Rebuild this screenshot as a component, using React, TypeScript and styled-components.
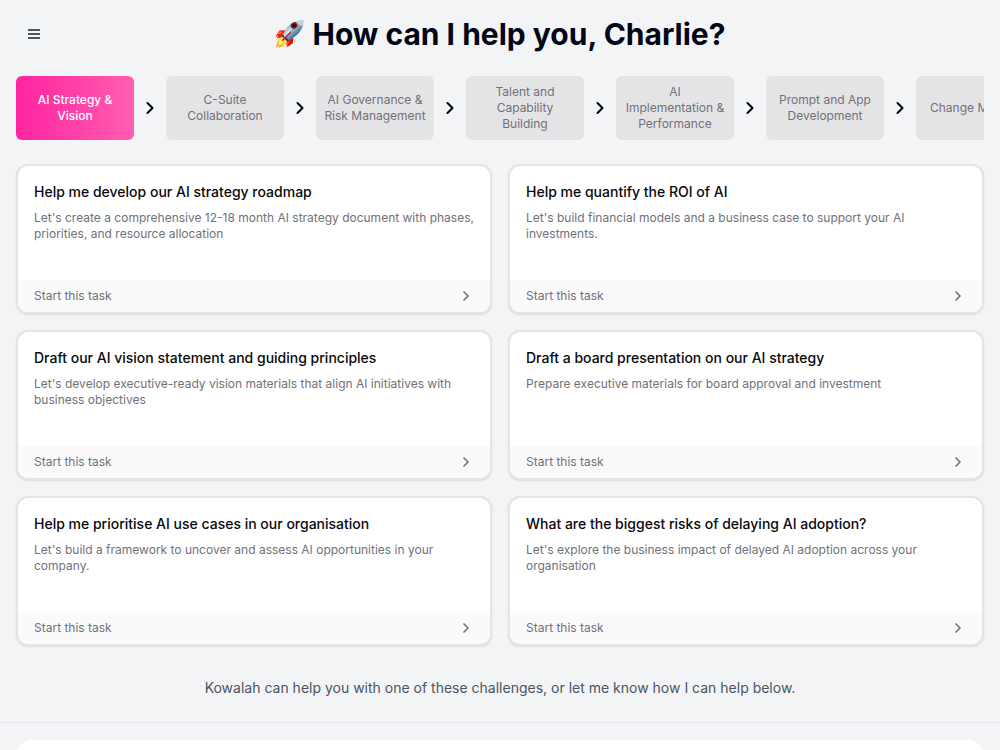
import React from "react";
import styled, { createGlobalStyle } from "styled-components";
import { ChevronRight } from "lucide-react";

const GlobalStyle = createGlobalStyle`
  *, *::before, *::after { box-sizing: border-box; }
  body {
    margin: 0;
    background: #f3f4f6;
    font-family: Inter, "Liberation Sans", sans-serif;
    color: #020617;
  }
  h1, h2, p, ol, ul { margin: 0; padding: 0; }
  button, textarea { font: inherit; }
`;

const Page = styled.div`
  height: 100vh;
  overflow: hidden;
`;

const Header = styled.header`
  display: grid;
  grid-template-columns: 36px 1fr 36px;
  align-items: center;
  padding: 16px;
`;

const MenuButton = styled.button`
  display: flex;
  align-items: center;
  justify-content: center;
  height: 36px;
  padding: 0;
  border: 0;
  border-radius: 6px;
  background: transparent;
  color: #4b5563;
  cursor: pointer;
`;

const Title = styled.h1`
  display: flex;
  align-items: center;
  justify-content: center;
  gap: 8px;
  font-size: 30px;
  line-height: 36px;
  font-weight: 700;
`;

const Steps = styled.ol`
  display: flex;
  margin: 8px 16px 0;
  overflow: hidden;
  list-style: none;
`;

const Step = styled.li`
  display: flex;
  flex: none;
  align-items: center;
`;

const StepButton = styled.button<{ $active?: boolean; $wide?: boolean }>`
  width: ${(p) => (p.$wide ? "auto" : "118px")};
  height: 64px;
  padding: 0 ${(p) => (p.$wide ? "14px" : "8px")};
  border: 0;
  border-radius: 6px;
  background: ${(p) => (p.$active ? "linear-gradient(to right, #ff24a0, #ff5eb0)" : "#e4e4e6")};
  color: ${(p) => (p.$active ? "#ffffff" : "#71717a")};
  font-size: 12px;
  line-height: 16px;
  font-weight: ${(p) => (p.$active ? 500 : 400)};
  text-align: center;
  cursor: pointer;
`;

const StepArrow = styled(ChevronRight)`
  margin: 0 6px;
  color: #020617;
`;

const Tasks = styled.ul`
  display: grid;
  grid-template-columns: 1fr 1fr;
  gap: 16px;
  padding: 24px 16px 0;
  list-style: none;
`;

const Card = styled.li`
  display: flex;
  flex-direction: column;
  height: 150px;
  overflow: hidden;
  border: 2px solid #e4e4e7;
  border-radius: 12px;
  background: #ffffff;
  box-shadow: 0 1px 2px rgba(0, 0, 0, 0.1);
`;

const CardBody = styled.div`
  flex: 1;
  padding: 16px 16px 0;
`;

const CardTitle = styled.h2`
  font-size: 14px;
  line-height: 20px;
  font-weight: 500;
  color: #09090b;
`;

const CardText = styled.p`
  margin-top: 8px;
  font-size: 12px;
  line-height: 16px;
  color: #71717a;
`;

const StartButton = styled.button`
  display: flex;
  align-items: center;
  justify-content: space-between;
  height: 32px;
  padding: 0 16px;
  border: 0;
  background: #fafafa;
  color: #71717a;
  font-size: 12px;
  line-height: 16px;
  cursor: pointer;
`;

const Hint = styled.p`
  padding: 32px 16px 24px;
  font-size: 14px;
  line-height: 20px;
  text-align: center;
  color: #4b5563;
`;

const Composer = styled.form`
  padding: 17px 16px;
  border-top: 1px solid #e2e4e7;
`;

const Prompt = styled.textarea`
  display: block;
  width: 100%;
  height: 96px;
  padding: 16px;
  border: 0;
  border-radius: 16px;
  background: #ffffff;
  font-size: 14px;
  line-height: 20px;
  resize: none;
`;

const steps = [
  "AI Strategy & Vision",
  "C-Suite Collaboration",
  "AI Governance & Risk Management",
  "Talent and Capability Building",
  "AI Implementation & Performance",
  "Prompt and App Development",
  "Change Management",
];

const tasks = [
  {
    title: "Help me develop our AI strategy roadmap",
    text: "Let's create a comprehensive 12-18 month AI strategy document with phases, priorities, and resource allocation",
  },
  {
    title: "Help me quantify the ROI of AI",
    text: "Let's build financial models and a business case to support your AI investments.",
  },
  {
    title: "Draft our AI vision statement and guiding principles",
    text: "Let's develop executive-ready vision materials that align AI initiatives with business objectives",
  },
  {
    title: "Draft a board presentation on our AI strategy",
    text: "Prepare executive materials for board approval and investment",
  },
  {
    title: "Help me prioritise AI use cases in our organisation",
    text: "Let's build a framework to uncover and assess AI opportunities in your company.",
  },
  {
    title: "What are the biggest risks of delaying AI adoption?",
    text: "Let's explore the business impact of delayed AI adoption across your organisation",
  },
];

function MenuIcon() {
  return (
    <svg width="12" height="10" viewBox="0 0 12 10" fill="currentColor" aria-hidden="true">
      <rect width="12" height="2" />
      <rect y="4" width="12" height="2" />
      <rect y="8" width="12" height="2" />
    </svg>
  );
}

function Rocket() {
  return (
    <svg width="30" height="30" viewBox="-1 -0.5 31 31" role="img" aria-label="Rocket">
      <defs>
        <linearGradient id="hull" x1="9" y1="7" x2="20" y2="19" gradientUnits="userSpaceOnUse">
          <stop offset="0" stopColor="#3f78a8" />
          <stop offset="0.35" stopColor="#b9d7ea" />
          <stop offset="0.6" stopColor="#8fb3cd" />
          <stop offset="1" stopColor="#34658f" />
        </linearGradient>
        <linearGradient id="flame" x1="10" y1="20" x2="2" y2="29" gradientUnits="userSpaceOnUse">
          <stop offset="0" stopColor="#ffe85a" />
          <stop offset="0.5" stopColor="#ffd21f" />
          <stop offset="1" stopColor="#f58a12" />
        </linearGradient>
      </defs>
      <path d="M11 11 4.5 11.5 0.3 18l3-1.2L2 19.5l6.5-1.2z" fill="#f0200f" />
      <path d="M4.5 11.5 1.8 15.7 8 14z" fill="#ff6a2b" />
      <path d="M19 18.5 18.5 24.5 12 29l1-3.5-1.5 1 .8-6z" fill="#e5150c" />
      <path d="M15 21 12.4 28.5 12 24z" fill="#ff5b25" />
      <path d="M8.5 18.2 3 20.2 1 29l2.8-2-.2 2.3 6-2.2 3-5.4z" fill="url(#flame)" />
      <path d="M8 20.5 4.5 22 3 27l4-2z" fill="#fff08a" />
      <path d="M29.3 0.8C22 1 16 3.5 11.5 9.5L7.2 17.3l5.4 5.2 7.4-4.3C26.2 13.5 29.5 8 29.3 0.8z" fill="url(#hull)" />
      <path d="M29.3 0.8C27 0.8 24.8 1.1 22.8 1.8c1.2 2.8 2.8 4.3 5.3 5.2.9-2 1.2-4 1.2-6.2z" fill="#c9ced3" />
      <path d="M8.2 15.5 14.5 21.5 12.6 22.5 7.2 17.3z" fill="#28415a" />
      <path d="M14 11.5 18 8l-4 7-4 4-1-1z" fill="#e7f4fb" opacity="0.75" />
      <ellipse cx="19.8" cy="6.2" rx="3.6" ry="3.2" fill="#8d1717" transform="rotate(-35 19.8 6.2)" />
      <ellipse cx="19.8" cy="6.2" rx="2" ry="1.8" fill="#171219" />
      <path d="M16.2 12.2 7.5 20.8 6.8 22.3 9 21.7 16.5 13.6z" fill="#c61b1b" />
    </svg>
  );
}

export default function App() {
  return (
    <Page>
      <GlobalStyle />
      <Header>
        <MenuButton type="button" aria-label="Open menu">
          <MenuIcon />
        </MenuButton>
        <Title>
          <Rocket />
          How can I help you, Charlie?
        </Title>
      </Header>
      <main>
        <Steps>
          {steps.map((label, i) => (
            <Step key={label}>
              <StepButton type="button" $active={i === 0} $wide={i === steps.length - 1}>
                {label}
              </StepButton>
              {i < steps.length - 1 && <StepArrow size={20} strokeWidth={2.5} aria-hidden="true" />}
            </Step>
          ))}
        </Steps>
        <Tasks>
          {tasks.map((task) => (
            <Card key={task.title}>
              <CardBody>
                <CardTitle>{task.title}</CardTitle>
                <CardText>{task.text}</CardText>
              </CardBody>
              <StartButton type="button">
                Start this task
                <ChevronRight size={16} strokeWidth={2.5} aria-hidden="true" />
              </StartButton>
            </Card>
          ))}
        </Tasks>
        <Hint>Kowalah can help you with one of these challenges, or let me know how I can help below.</Hint>
      </main>
      <Composer>
        <Prompt aria-label="Message" />
      </Composer>
    </Page>
  );
}
